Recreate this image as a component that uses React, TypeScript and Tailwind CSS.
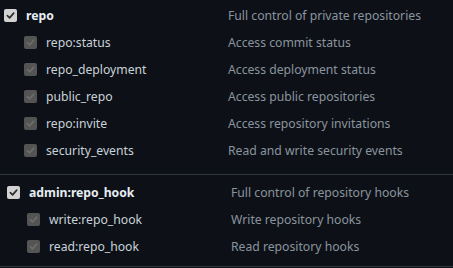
import React from "react";

type Row = { label: string; desc: string };

function Box({ main }: { main?: boolean }) {
  return (
    <span
      className={
        "flex h-[13px] w-[13px] shrink-0 items-center justify-center rounded-[2px] " +
        (main ? "bg-[#d2d2d2]" : "bg-[#545454]")
      }
    >
      <svg width="9" height="9" viewBox="0 0 10 10">
        <path
          d="M1.5 5.2 L4 7.6 L8.6 2.4"
          fill="none"
          stroke={main ? "#2b2b2b" : "#6c6c6c"}
          strokeWidth="1.8"
          strokeLinecap="round"
          strokeLinejoin="round"
        />
      </svg>
    </span>
  );
}

function Section({
  main,
  subs,
  shift,
  pt,
  pb,
}: {
  main: Row;
  subs: Row[];
  shift: boolean;
  pt: string;
  pb: string;
}) {
  return (
    <div className={"border-b border-[#30363d] " + pt + " " + pb + " " + (shift ? "pl-[7px]" : "pl-[4px]")}>
      <div className="flex h-[27px] items-center">
        <div className="flex w-[224px] items-center gap-[9px]">
          <Box main />
          <span className="font-bold text-[#e6edf3]">{main.label}</span>
        </div>
        <span className="text-[#8b949e]">{main.desc}</span>
      </div>
      {subs.map((s) => (
        <div key={s.label} className="flex h-[27px] items-center">
          <div className="flex w-[224px] items-center gap-[9px] pl-[20px]">
            <Box />
            <span className="text-[#c9d1d9]">{s.label}</span>
          </div>
          <span className="text-[#8b949e]">{s.desc}</span>
        </div>
      ))}
    </div>
  );
}

export default function App() {
  return (
    <div
      className="h-[268px] w-[453px] overflow-hidden bg-[#0d1117] text-[12.2px] leading-[18px]"
      style={{ fontFamily: '"Noto Sans", "Open Sans", sans-serif' }}
    >
      <Section
        shift={false}
        pt="pt-[2px]"
        pb="pb-[10px]"
        main={{ label: "repo", desc: "Full control of private repositories" }}
        subs={[
          { label: "repo:status", desc: "Access commit status" },
          { label: "repo_deployment", desc: "Access deployment status" },
          { label: "public_repo", desc: "Access public repositories" },
          { label: "repo:invite", desc: "Access repository invitations" },
          { label: "security_events", desc: "Read and write security events" },
        ]}
      />
      <Section
        shift
        pt="pt-[4px]"
        pb="pb-[6px]"
        main={{ label: "admin:repo_hook", desc: "Full control of repository hooks" }}
        subs={[
          { label: "write:repo_hook", desc: "Write repository hooks" },
          { label: "read:repo_hook", desc: "Read repository hooks" },
        ]}
      />
    </div>
  );
}
